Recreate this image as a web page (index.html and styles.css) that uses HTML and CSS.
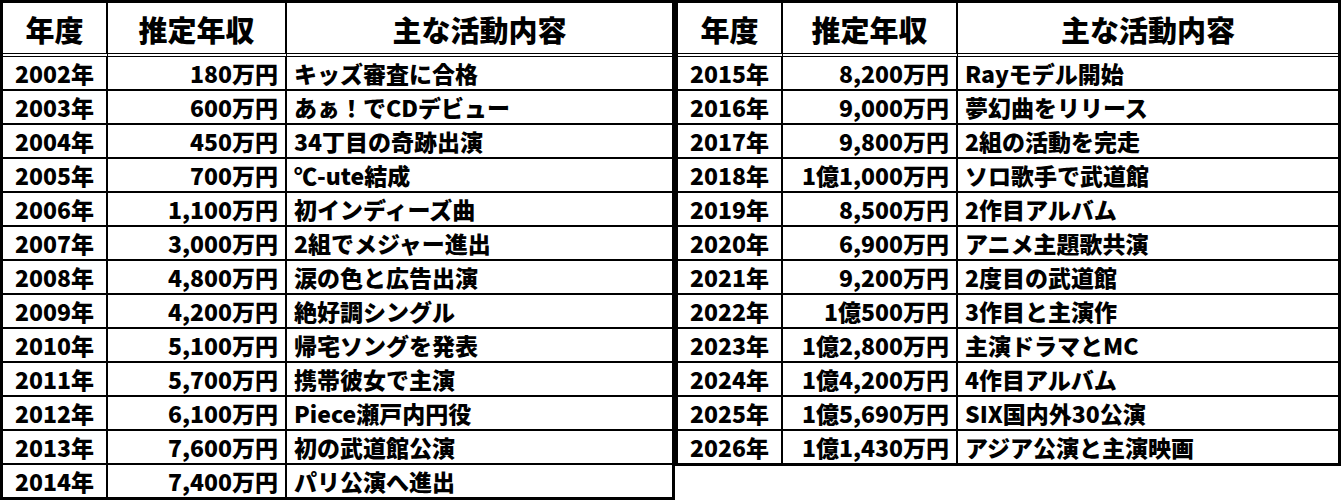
FILE: index.html
```html
<!DOCTYPE html>
<html lang="ja">
<head>
<meta charset="utf-8">
<link rel="stylesheet" href="styles.css">
</head>
<body>
<div class="wrap">
  <table class="tbl left">
    <thead>
      <tr><th class="c-year">年度</th><th class="c-inc">推定年収</th><th class="c-act">主な活動内容</th></tr>
    </thead>
    <tbody>
      <tr><td class="c-year">2002年</td><td class="c-inc">180万円</td><td class="c-act">キッズ審査に合格</td></tr>
      <tr><td class="c-year">2003年</td><td class="c-inc">600万円</td><td class="c-act">あぁ！でCDデビュー</td></tr>
      <tr><td class="c-year">2004年</td><td class="c-inc">450万円</td><td class="c-act">34丁目の奇跡出演</td></tr>
      <tr><td class="c-year">2005年</td><td class="c-inc">700万円</td><td class="c-act">℃-ute結成</td></tr>
      <tr><td class="c-year">2006年</td><td class="c-inc">1,100万円</td><td class="c-act">初インディーズ曲</td></tr>
      <tr><td class="c-year">2007年</td><td class="c-inc">3,000万円</td><td class="c-act">2組でメジャー進出</td></tr>
      <tr><td class="c-year">2008年</td><td class="c-inc">4,800万円</td><td class="c-act">涙の色と広告出演</td></tr>
      <tr><td class="c-year">2009年</td><td class="c-inc">4,200万円</td><td class="c-act">絶好調シングル</td></tr>
      <tr><td class="c-year">2010年</td><td class="c-inc">5,100万円</td><td class="c-act">帰宅ソングを発表</td></tr>
      <tr><td class="c-year">2011年</td><td class="c-inc">5,700万円</td><td class="c-act">携帯彼女で主演</td></tr>
      <tr><td class="c-year">2012年</td><td class="c-inc">6,100万円</td><td class="c-act">Piece瀬戸内円役</td></tr>
      <tr><td class="c-year">2013年</td><td class="c-inc">7,600万円</td><td class="c-act">初の武道館公演</td></tr>
      <tr><td class="c-year">2014年</td><td class="c-inc">7,400万円</td><td class="c-act">パリ公演へ進出</td></tr>
    </tbody>
  </table>
  <table class="tbl right">
    <thead>
      <tr><th class="c-year">年度</th><th class="c-inc">推定年収</th><th class="c-act">主な活動内容</th></tr>
    </thead>
    <tbody>
      <tr><td class="c-year">2015年</td><td class="c-inc">8,200万円</td><td class="c-act">Rayモデル開始</td></tr>
      <tr><td class="c-year">2016年</td><td class="c-inc">9,000万円</td><td class="c-act">夢幻曲をリリース</td></tr>
      <tr><td class="c-year">2017年</td><td class="c-inc">9,800万円</td><td class="c-act">2組の活動を完走</td></tr>
      <tr><td class="c-year">2018年</td><td class="c-inc">1億1,000万円</td><td class="c-act">ソロ歌手で武道館</td></tr>
      <tr><td class="c-year">2019年</td><td class="c-inc">8,500万円</td><td class="c-act">2作目アルバム</td></tr>
      <tr><td class="c-year">2020年</td><td class="c-inc">6,900万円</td><td class="c-act">アニメ主題歌共演</td></tr>
      <tr><td class="c-year">2021年</td><td class="c-inc">9,200万円</td><td class="c-act">2度目の武道館</td></tr>
      <tr><td class="c-year">2022年</td><td class="c-inc">1億500万円</td><td class="c-act">3作目と主演作</td></tr>
      <tr><td class="c-year">2023年</td><td class="c-inc">1億2,800万円</td><td class="c-act">主演ドラマとMC</td></tr>
      <tr><td class="c-year">2024年</td><td class="c-inc">1億4,200万円</td><td class="c-act">4作目アルバム</td></tr>
      <tr><td class="c-year">2025年</td><td class="c-inc">1億5,690万円</td><td class="c-act">SIX国内外30公演</td></tr>
      <tr><td class="c-year">2026年</td><td class="c-inc">1億1,430万円</td><td class="c-act">アジア公演と主演映画</td></tr>
    </tbody>
  </table>
</div>
</body>
</html>
```
FILE: styles.css
```css
html, body {
  margin: 0;
  padding: 0;
  background: #fff;
}
body {
  font-family: "Noto Sans CJK JP", "Noto Sans", sans-serif;
  font-weight: 900;
  color: #000;
}
.wrap {
  display: flex;
  align-items: flex-start;
}
.tbl {
  border: 3px solid #000;
  border-collapse: separate;
  border-spacing: 0;
  table-layout: fixed;
}
.tbl.left { width: 675px; }
.tbl.right { width: 666px; }
.tbl th, .tbl td {
  box-sizing: border-box;
  padding: 0;
  border-right: 2px solid #000;
  border-bottom: 2px solid #000;
  white-space: nowrap;
}
.tbl th:last-child, .tbl td:last-child { border-right: none; }
.tbl tbody tr:last-child td { border-bottom: none; }
.tbl th {
  height: 54px;
  font-size: 29px;
  font-weight: 900;
  text-align: center;
  border-bottom: 4px double #000;
  line-height: 1;
  padding-top: 2px;
}
.tbl td {
  height: 34px;
  font-size: 23px;
  line-height: 1;
}
.tbl tbody tr:last-child td { height: 32px; }
.left .c-year { width: 105px; }
.left .c-inc { width: 179px; }
.left .c-act { width: 385px; }
.right .c-year { width: 105px; }
.right .c-inc { width: 175px; }
.right .c-act { width: 380px; }
td.c-year { padding-left: 12px; }
td.c-inc { text-align: right; padding-right: 7px; }
td.c-act { padding-left: 7px; }
```
